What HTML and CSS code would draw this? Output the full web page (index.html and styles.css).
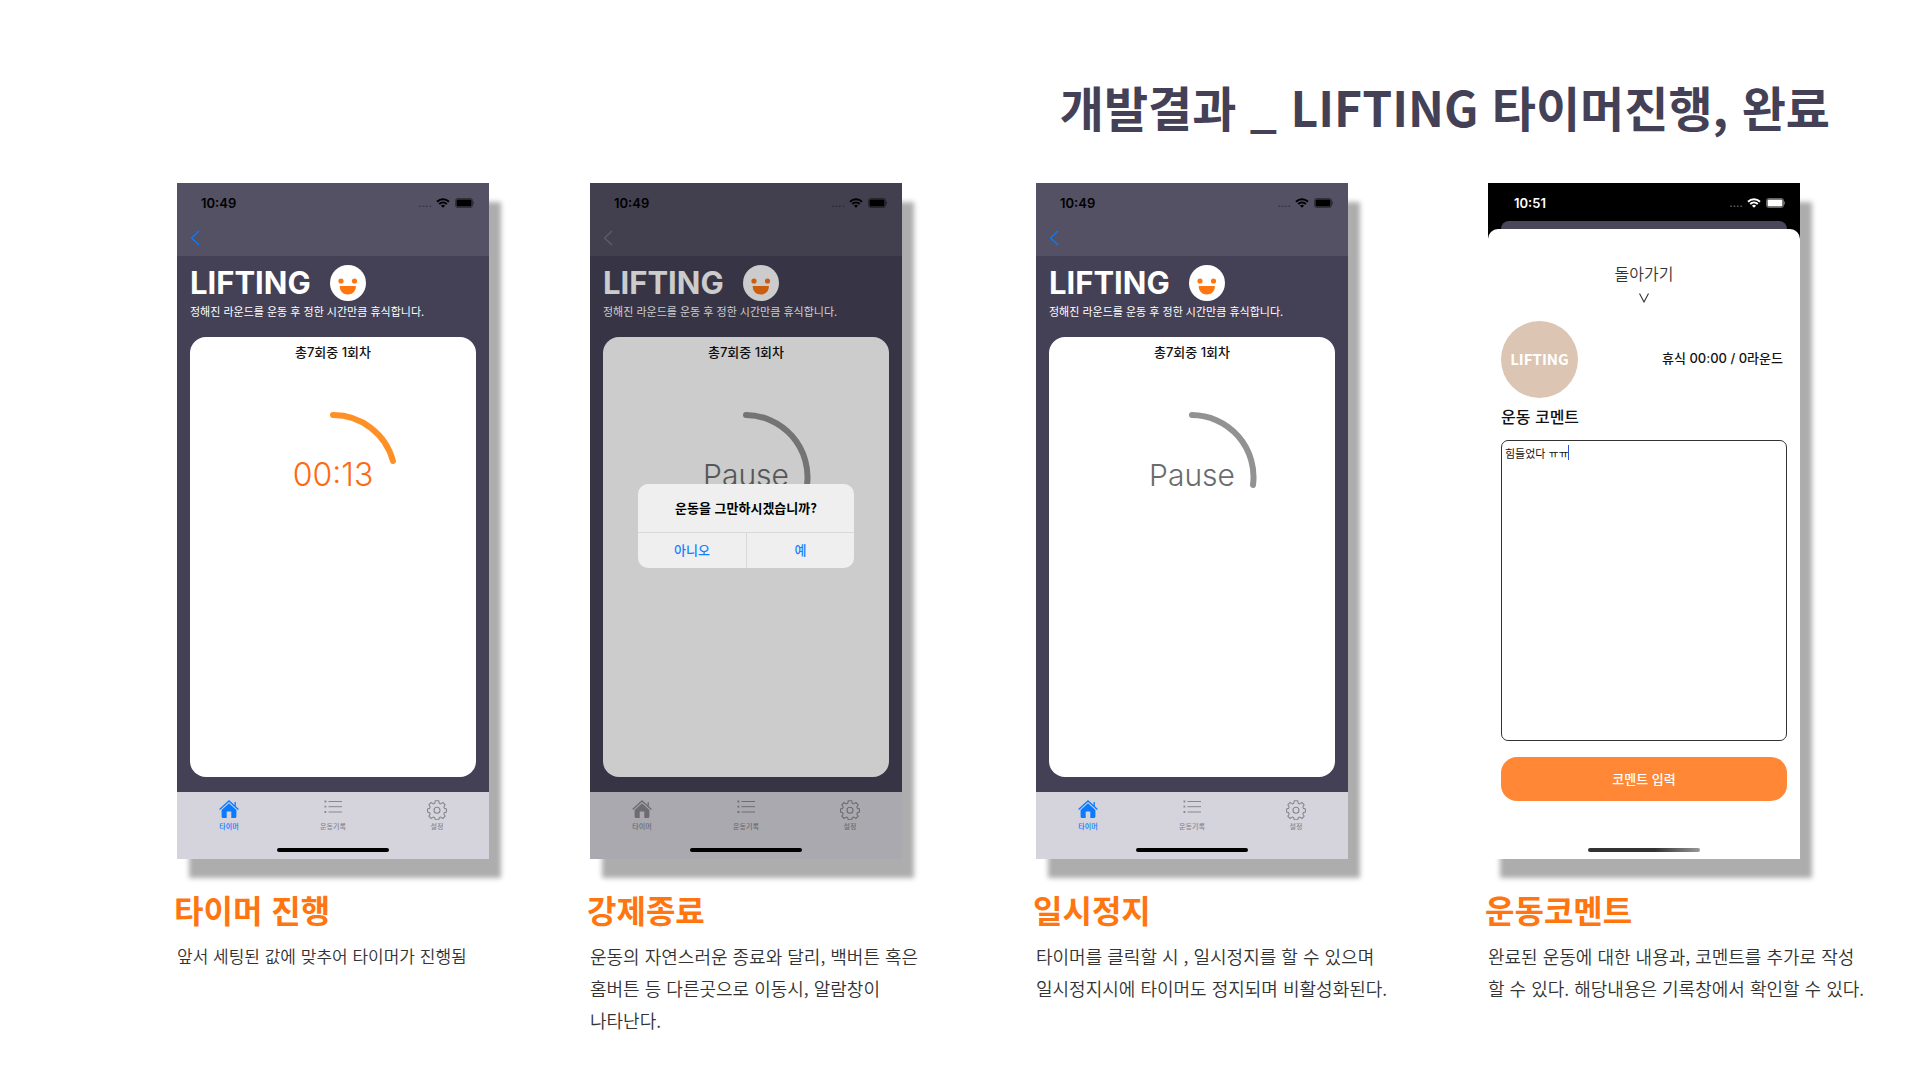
FILE: index.html
```html
<!DOCTYPE html>
<html lang="ko">
<head>
<meta charset="utf-8">
<meta name="viewport" content="width=device-width, initial-scale=1">
<title>개발결과 _ LIFTING</title>
<link rel="stylesheet" href="styles.css">
</head>
<body>
<svg class="sprite" aria-hidden="true">
  <symbol id="wifi" viewBox="0 0 14 10">
    <path d="M1 3.7a8.6 8.6 0 0 1 12 0M3.2 6a5.5 5.5 0 0 1 7.6 0" fill="none" stroke="currentColor" stroke-width="1.9"/>
    <path d="M7 9.8 4.9 7.7a3 3 0 0 1 4.2 0z" fill="currentColor"/>
  </symbol>
  <symbol id="battery" viewBox="0 0 20 10">
    <rect x=".5" y=".5" width="17" height="9" rx="2" fill="none" stroke="currentColor" opacity=".4"/>
    <rect x="1.5" y="1.5" width="15" height="7" rx="1" fill="currentColor"/>
    <path d="M18.5 3.5v3" stroke="currentColor" opacity=".4"/>
  </symbol>
  <symbol id="chevron" viewBox="0 0 10 16">
    <path d="M9 1 1.500 8 9 15" fill="none" stroke="currentColor" stroke-width="1.3"/>
  </symbol>
  <symbol id="down" viewBox="0 0 10 10">
    <path d="M.5 .5 5 9 9.500 .5" fill="none" stroke="currentColor" stroke-width="1.100"/>
  </symbol>
  <symbol id="smile" viewBox="0 0 36 36">
    <circle cx="18" cy="18" r="18" fill="#fff"/>
    <circle cx="11" cy="16" r="2.600" fill="#ff7510"/>
    <circle cx="24.500" cy="16" r="2.600" fill="#ff7510"/>
    <path d="M9.700 21h16.200c0 5.500-3.500 8.500-8.100 8.500S9.700 26.500 9.700 21z" fill="#ff7510"/>
  </symbol>
  <symbol id="house" viewBox="0 0 20 18">
    <path d="M.6 9.600 10 1l9.400 8.600M16.200 6.500V2" fill="none" stroke="currentColor" stroke-width="1.300"/>
    <path d="M10 3.200 17.400 10v6.500q0 1.500-1.500 1.500H12.300v-6.500H7.700V18H4.100q-1.500 0-1.500-1.500V10z" fill="currentColor"/>
  </symbol>
  <symbol id="list" viewBox="0 0 18 14">
    <path d="M4.500 1.500H18M4.500 6.700H18M4.500 12H18" stroke="currentColor"/>
    <path d="M.5 1.500h1.800M.5 6.700h1.800M.5 12h1.800" stroke="currentColor" stroke-width="1.800"/>
  </symbol>
  <symbol id="gear" viewBox="0 0 20 20">
    <path d="M8.300 .7h3.400l.5 2.500 1.500.7 2.200-1.400 2.300 2.300-1.400 2.200.6 1.400 2.100.6v3l-2.100.6-.6 1.400 1.400 2.200-2.300 2.300-2.200-1.400-1.500.7-.5 2.100H8.300l-.5-2.100-1.500-.7-2.200 1.400-2.300-2.300 1.400-2.200-.6-1.400-2.100-.6v-3l2.100-.6.600-1.400-1.400-2.200 2.300-2.300 2.200 1.400 1.500-.7z" fill="none" stroke="currentColor" stroke-width="1.100" stroke-linejoin="round"/>
    <circle cx="10" cy="10.200" r="3" fill="none" stroke="currentColor" stroke-width="1.100"/>
  </symbol>
</svg>

<h1 class="page-title">개발결과 _ LIFTING 타이머진행, 완료</h1>

<main class="steps">
  <section class="step">
    <div class="phone">
      <header class="topbar">
        <div class="status"><span class="clock">10:49</span><span class="dots">....</span><svg class="wifi"><use href="#wifi"/></svg><svg class="battery"><use href="#battery"/></svg></div>
        <button class="back" aria-label="뒤로"><svg><use href="#chevron"/></svg></button>
      </header>
      <div class="screen">
        <div class="brand"><h2>LIFTING</h2><svg><use href="#smile"/></svg></div>
        <p class="lead">정해진 라운드를 운동 후 정한 시간만큼 휴식합니다.</p>
        <div class="card">
          <p class="round">총7회중 1회차</p>
          <button class="timer">
            <svg viewBox="0 0 130 130"><path d="M65 3A62 62 0 0 1 125 49"/></svg>
            <span>00:13</span>
          </button>
        </div>
      </div>
      <nav class="tabs">
        <button class="tab active"><svg class="house"><use href="#house"/></svg><span>타이머</span></button>
        <button class="tab"><svg class="list"><use href="#list"/></svg><span>운동기록</span></button>
        <button class="tab"><svg class="gear"><use href="#gear"/></svg><span>설정</span></button>
      </nav>
      <div class="home-bar"></div>
    </div>
    <div class="caption">
      <h3>타이머 진행</h3>
      <p class="tight">앞서 세팅된 값에 맞추어 타이머가 진행됨</p>
    </div>
  </section>

  <section class="step">
    <div class="phone dimmed">
      <header class="topbar">
        <div class="status"><span class="clock">10:49</span><span class="dots">....</span><svg class="wifi"><use href="#wifi"/></svg><svg class="battery"><use href="#battery"/></svg></div>
        <button class="back" aria-label="뒤로"><svg><use href="#chevron"/></svg></button>
      </header>
      <div class="screen">
        <div class="brand"><h2>LIFTING</h2><svg><use href="#smile"/></svg></div>
        <p class="lead">정해진 라운드를 운동 후 정한 시간만큼 휴식합니다.</p>
        <div class="card">
          <p class="round">총7회중 1회차</p>
          <button class="timer paused">
            <svg viewBox="0 0 130 130"><path d="M65 3A62 62 0 0 1 126 73"/></svg>
            <span>Pause</span>
          </button>
        </div>
      </div>
      <nav class="tabs">
        <button class="tab"><svg class="house"><use href="#house"/></svg><span>타이머</span></button>
        <button class="tab"><svg class="list"><use href="#list"/></svg><span>운동기록</span></button>
        <button class="tab"><svg class="gear"><use href="#gear"/></svg><span>설정</span></button>
      </nav>
      <div class="home-bar"></div>
      <div class="backdrop">
        <div class="alert" role="alertdialog" aria-labelledby="stop-title">
          <p id="stop-title">운동을 그만하시겠습니까?</p>
          <div class="choices"><button>아니오</button><button>예</button></div>
        </div>
      </div>
    </div>
    <div class="caption">
      <h3>강제종료</h3>
      <p>운동의 자연스러운 종료와 달리, 백버튼 혹은<br>홈버튼 등 다른곳으로 이동시, 알람창이<br>나타난다.</p>
    </div>
  </section>

  <section class="step">
    <div class="phone">
      <header class="topbar">
        <div class="status"><span class="clock">10:49</span><span class="dots">....</span><svg class="wifi"><use href="#wifi"/></svg><svg class="battery"><use href="#battery"/></svg></div>
        <button class="back" aria-label="뒤로"><svg><use href="#chevron"/></svg></button>
      </header>
      <div class="screen">
        <div class="brand"><h2>LIFTING</h2><svg><use href="#smile"/></svg></div>
        <p class="lead">정해진 라운드를 운동 후 정한 시간만큼 휴식합니다.</p>
        <div class="card">
          <p class="round">총7회중 1회차</p>
          <button class="timer paused">
            <svg viewBox="0 0 130 130"><path d="M65 3A62 62 0 0 1 126 73"/></svg>
            <span>Pause</span>
          </button>
        </div>
      </div>
      <nav class="tabs">
        <button class="tab active"><svg class="house"><use href="#house"/></svg><span>타이머</span></button>
        <button class="tab"><svg class="list"><use href="#list"/></svg><span>운동기록</span></button>
        <button class="tab"><svg class="gear"><use href="#gear"/></svg><span>설정</span></button>
      </nav>
      <div class="home-bar"></div>
    </div>
    <div class="caption">
      <h3>일시정지</h3>
      <p>타이머를 클릭할 시 , 일시정지를 할 수 있으며<br>일시정지시에 타이머도 정지되며 비활성화된다.</p>
    </div>
  </section>

  <section class="step">
    <div class="phone modal">
      <div class="status"><span class="clock">10:51</span><span class="dots">....</span><svg class="wifi"><use href="#wifi"/></svg><svg class="battery"><use href="#battery"/></svg></div>
      <div class="sheet-behind"></div>
      <form class="sheet">
        <button type="button" class="return"><span>돌아가기</span><svg><use href="#down"/></svg></button>
        <div class="summary"><span class="badge">LIFTING</span><span class="rest">휴식 00:00 / 0라운드</span></div>
        <label for="comment">운동 코멘트</label>
        <div class="field"><textarea id="comment" spellcheck="false">힘들었다 ㅠㅠ</textarea><span class="caret"></span></div>
        <button type="button" class="submit">코멘트 입력</button>
      </form>
      <div class="home-bar"></div>
    </div>
    <div class="caption">
      <h3>운동코멘트</h3>
      <p>완료된 운동에 대한 내용과, 코멘트를 추가로 작성<br>할 수 있다. 해당내용은 기록창에서 확인할 수 있다.</p>
    </div>
  </section>
</main>
</body>
</html>
```

FILE: styles.css
```css
* { box-sizing: border-box; }
body, h1, h2, h3, p { margin: 0; }
body {
  background: #fff;
  color: #333;
  font-family: "Noto Sans CJK KR", sans-serif;
  padding-top: 70px;
}
button {
  border: 0;
  padding: 0;
  background: none;
  color: inherit;
  font: inherit;
}
svg { display: block; flex: none; }
.sprite { position: absolute; width: 0; height: 0; }

.page-title {
  padding-right: 90px;
  text-align: right;
  font-size: 48px;
  line-height: 72px;
  font-weight: 700;
  color: #444157;
}

.steps {
  display: grid;
  grid-template-columns: 413fr 446fr 452fr 432fr;
  margin-top: 41px;
  padding-left: 177px;
}

/* Phone frame */
.phone {
  position: relative;
  display: flex;
  flex-direction: column;
  width: 100%;
  max-width: 312px;
  min-height: 676px;
  background: #444157;
  box-shadow: 12px 19px 5px #adadad;
  font-family: Inter, "Noto Sans CJK KR", sans-serif;
}
.topbar { height: 73px; background: #535163; }
.status {
  display: flex;
  align-items: center;
  height: 37px;
  padding: 3px 14px 0 24px;
  color: #000;
}
.clock { font-size: 13px; line-height: 16px; font-weight: 600; margin-right: auto; }
.dots { font-size: 12px; line-height: 10px; opacity: .4; margin-right: 4px; }
.wifi { width: 14px; height: 10px; margin-right: 5px; }
.battery { width: 20px; height: 10px; }
.back { display: block; padding: 10px 13px; color: #0a7aff; }
.back svg { width: 10px; height: 16px; }

.screen {
  flex: 1;
  display: flex;
  flex-direction: column;
  padding: 9px 13px 15px;
}
.brand { display: flex; align-items: center; gap: 19px; color: #fff; }
.brand h2 { font-size: 31px; line-height: 36px; font-weight: 700; }
.brand svg { width: 36px; height: 36px; }
.lead {
  margin-top: 2px;
  font-family: "Noto Sans CJK KR", sans-serif;
  font-size: 11px;
  line-height: 16px;
  color: #fff;
  white-space: nowrap;
}
.card {
  flex: 1;
  display: flex;
  flex-direction: column;
  align-items: center;
  margin-top: 18px;
  padding-top: 5px;
  border-radius: 16px;
  background: #fff;
}
.round { font-size: 13px; line-height: 20px; font-weight: 500; color: #111; }
.timer {
  display: grid;
  place-items: center;
  width: 130px;
  height: 130px;
  margin-top: 50px;
  color: #ff6a10;
}
.timer > * { grid-area: 1 / 1; }
.timer svg { width: 130px; height: 130px; }
.timer path { fill: none; stroke: #ff9025; stroke-width: 6; stroke-linecap: round; }
.timer span { padding-bottom: 4px; font-size: 32px; line-height: 36px; font-weight: 300; }
.paused { color: #6c6c6c; }
.paused path { stroke: #929292; }
.paused span { font-size: 30px; }

.tabs {
  display: grid;
  grid-template-columns: repeat(3, 1fr);
  height: 67px;
  padding-top: 8px;
  background: #d5d4dc;
  color: #88878e;
}
.tab { display: flex; flex-direction: column; align-items: center; justify-content: space-between; height: 32px; }
.tab span { font-size: 7px; line-height: 10px; font-weight: 500; }
.active { color: #0a7aff; }
.house { width: 20px; height: 18px; }
.list { width: 18px; height: 14px; }
.gear { width: 20px; height: 20px; }
.home-bar {
  position: absolute;
  left: 50%;
  bottom: 7px;
  width: 112px;
  height: 4px;
  margin-left: -56px;
  border-radius: 2px;
  background: #000;
}

/* Confirm dialog */
.backdrop {
  position: absolute;
  inset: 0;
  display: grid;
  place-items: center;
  padding-top: 10px;
  background: rgba(0, 0, 0, .2);
}
.dimmed .back { color: #77767e; }
.alert {
  width: 216px;
  border-radius: 10px;
  background: #efefef;
  overflow: hidden;
  text-align: center;
  font-family: "Noto Sans CJK KR", sans-serif;
  font-size: 13px;
}
.alert p { line-height: 48px; font-weight: 700; color: #000; }
.choices { display: grid; grid-template-columns: 1fr 1fr; border-top: 1px solid #d9d9d9; }
.choices button { padding-bottom: 1px; line-height: 34px; font-weight: 500; color: #1482ff; }
.choices button + button { border-left: 1px solid #d9d9d9; }

/* Comment sheet */
.modal { background: #000; }
.modal .status { color: #fff; padding-left: 26px; }
.sheet-behind { height: 8px; margin: 1px 13px 0; border-radius: 8px 8px 0 0; background: #4a475b; }
.sheet {
  flex: 1;
  display: flex;
  flex-direction: column;
  padding: 33px 13px 58px;
  border-radius: 10px 10px 0 0;
  background: #fff;
}
.return {
  display: flex;
  flex-direction: column;
  align-items: center;
  gap: 7px;
  font-size: 16px;
  line-height: 24px;
  font-weight: 350;
  color: #333;
}
.return svg { width: 10px; height: 10px; }
.summary { display: flex; align-items: center; justify-content: space-between; margin-top: 18px; }
.badge {
  display: grid;
  place-items: center;
  width: 77px;
  height: 77px;
  padding-bottom: 2px;
  border-radius: 50%;
  background: #dcc5b2;
  color: #fff;
  font-family: "Noto Sans CJK KR", sans-serif;
  font-size: 15px;
  font-weight: 700;
}
.rest { padding-bottom: 4px; margin-right: 4px; font-size: 13px; line-height: 20px; font-weight: 500; color: #111; }
.sheet label {
  margin-top: 6px;
  font-family: "Noto Sans CJK KR", sans-serif;
  font-size: 16px;
  line-height: 24px;
  font-weight: 500;
  color: #111;
}
.field { position: relative; display: flex; flex: 1; margin-top: 12px; }
.field textarea {
  width: 100%;
  padding: 4px 3px;
  border: 1px solid #333;
  border-radius: 7px;
  outline: 0;
  resize: none;
  background: #fff;
  color: #111;
  font-family: "Noto Sans CJK KR", sans-serif;
  font-size: 11px;
  line-height: 16px;
}
.caret { position: absolute; left: 67px; top: 5px; width: 1px; height: 15px; background: #3050e0; }
.submit {
  height: 44px;
  margin-top: 16px;
  padding-bottom: 2px;
  border-radius: 16px;
  background: #ff8736;
  color: #fff;
  font-family: "Noto Sans CJK KR", sans-serif;
  font-size: 13px;
  font-weight: 500;
}
.modal .home-bar { background: linear-gradient(90deg, #333 60%, #999); }

/* Captions */
.caption { margin-top: 30px; white-space: nowrap; }
.caption h3 { margin-left: -3px; font-size: 32px; line-height: 40px; font-weight: 700; color: #ff7510; }
.caption p { margin-top: 11px; font-size: 18px; line-height: 32px; font-weight: 350; }
.caption .tight { font-size: 17px; }
```
